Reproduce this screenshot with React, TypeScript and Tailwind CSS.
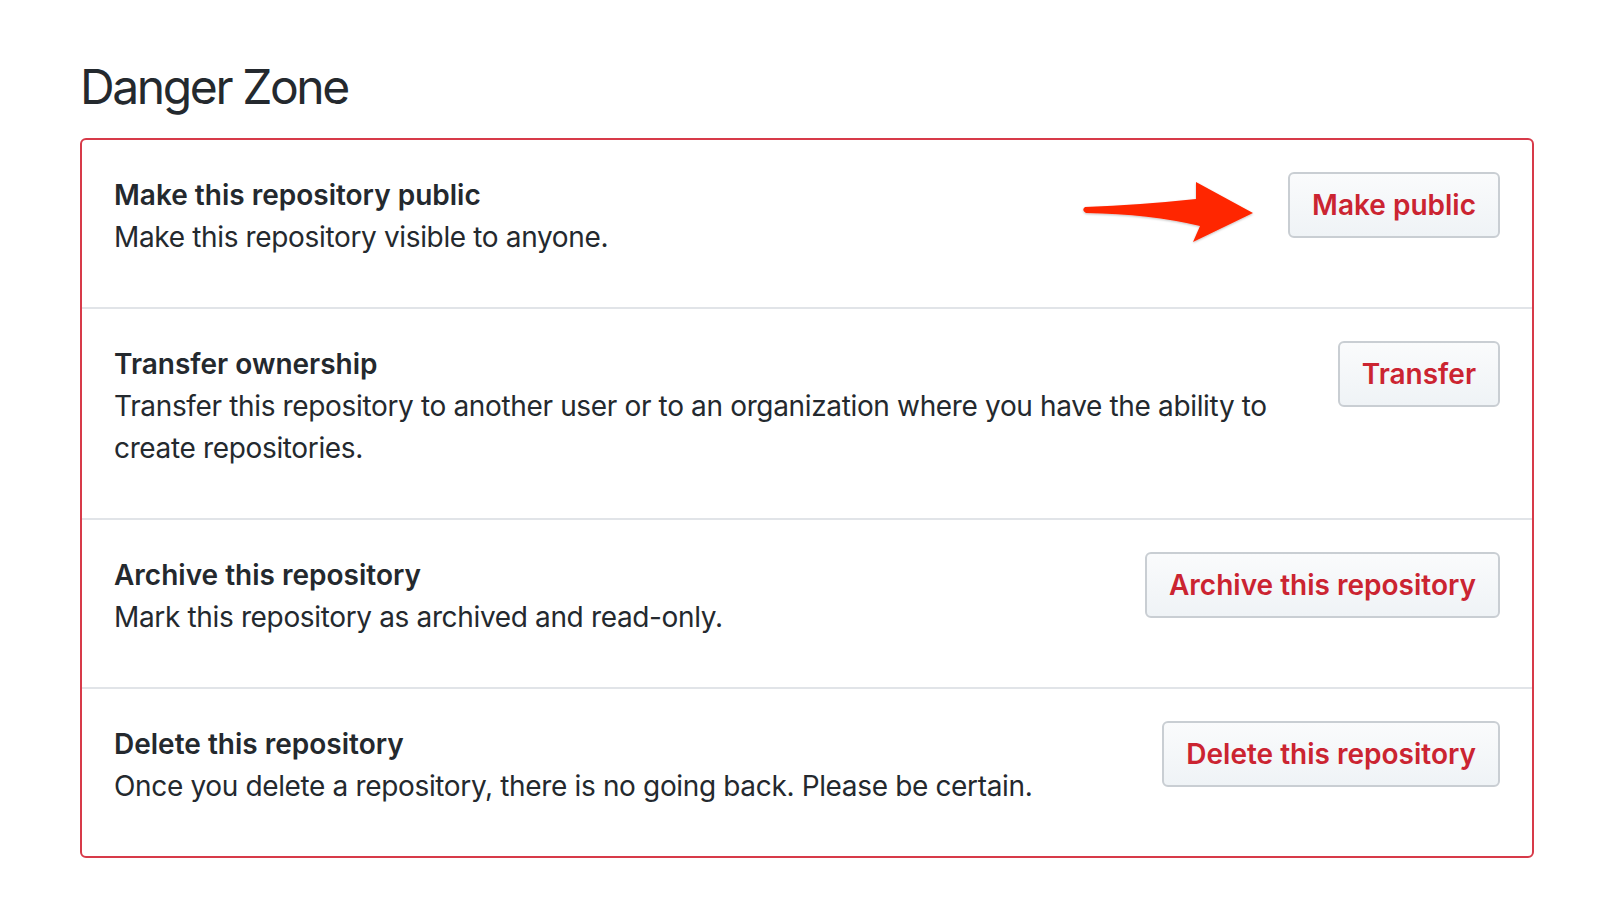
import React from "react";

const rows = [
  {
    title: "Make this repository public",
    desc: "Make this repository visible to anyone.",
    btn: "Make public",
  },
  {
    title: "Transfer ownership",
    desc: "Transfer this repository to another user or to an organization where you have the ability to create repositories.",
    btn: "Transfer",
  },
  {
    title: "Archive this repository",
    desc: "Mark this repository as archived and read-only.",
    btn: "Archive this repository",
  },
  {
    title: "Delete this repository",
    desc: "Once you delete a repository, there is no going back. Please be certain.",
    btn: "Delete this repository",
  },
];

function Arrow() {
  return (
    <svg
      className="absolute left-[1080px] top-[178px]"
      width="180"
      height="70"
      viewBox="0 0 180 70"
    >
      <defs>
        <filter id="sh" x="-10%" y="-20%" width="120%" height="140%">
          <feDropShadow dx="0" dy="1" stdDeviation="1" floodColor="#000" floodOpacity="0.25" />
        </filter>
      </defs>
      <path
        d="M5,29 Q60,27 116,21 L116,4 L173,35 L113,64 L120,48 Q70,36 6,35 Q1,32 5,29 Z"
        fill="#ff2600"
        filter="url(#sh)"
      />
    </svg>
  );
}

export default function App() {
  return (
    <div
      className="relative min-h-[902px] bg-white pl-[80px] pr-[78px] pt-[57px] text-[#24292e]"
      style={{ fontFamily: "Inter, 'Noto Sans', sans-serif" }}
    >
      <h2 className="mb-[21px] text-[48px] font-normal leading-[60px] tracking-[-2.4px]">Danger Zone</h2>
      <div className="rounded-[6px] border-2 border-[#d73a49]">
        {rows.map((r, i) => (
          <div
            key={r.title}
            className={
              "flex items-start gap-[32px] px-[32px] pt-[34px] pb-[29px] " +
              (i > 0 ? "border-t-2 border-[#e1e4e8]" : "")
            }
          >
            <div className="flex-1">
              <div className="text-[28px] font-semibold leading-[42px]">{r.title}</div>
              <p className="mb-[20px] text-[28px] leading-[42px] tracking-[-0.35px]">{r.desc}</p>
            </div>
            <button className="-mt-[2px] h-[66px] shrink-0 rounded-[6px] border-2 border-[#c9ced3] bg-gradient-to-b from-[#fafbfc] to-[#eff3f6] px-[22px] text-[28px] font-semibold text-[#cb2431]">
              {r.btn}
            </button>
          </div>
        ))}
      </div>
      <Arrow />
    </div>
  );
}
